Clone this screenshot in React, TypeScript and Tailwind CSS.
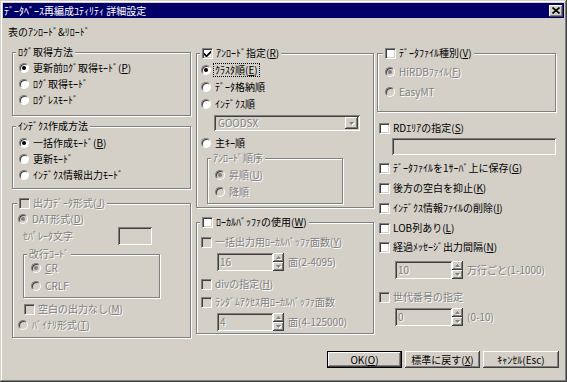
import React from "react";

const dim = "text-[#808080] [text-shadow:1px_1px_0_#fff]";
const raised =
  "bg-[#d4d0c8] shadow-[inset_-1px_-1px_0_#404040,inset_1px_1px_0_#fff,inset_-2px_-2px_0_#808080,inset_2px_2px_0_#d4d0c8]";
const sunken =
  "shadow-[inset_1px_1px_0_#808080,inset_-1px_-1px_0_#fff,inset_2px_2px_0_#404040,inset_-2px_-2px_0_#d4d0c8]";

const Label = ({ t }: { t: string }) => {
  const i = t.indexOf("&");
  if (i < 0) return <>{t}</>;
  return (
    <>
      {t.slice(0, i)}
      <span className="underline underline-offset-1">{t[i + 1]}</span>
      {t.slice(i + 2)}
    </>
  );
};

const Dot = ({ on, off }: { on?: boolean; off?: boolean }) => (
  <span
    className={`flex w-[10px] h-[10px] shrink-0 items-center justify-center rounded-full border border-t-[#808080] border-l-[#808080] border-r-white border-b-white shadow-[inset_1px_1px_0_#404040] ${
      off ? "bg-[#d4d0c8]" : "bg-white"
    }`}
  >
    {on && <span className={`w-[4px] h-[4px] rounded-full ${off ? "bg-[#808080]" : "bg-black"}`} />}
  </span>
);

const Box = ({ on, off }: { on?: boolean; off?: boolean }) => (
  <span
    className={`flex w-[11px] h-[11px] shrink-0 items-center justify-center border border-t-[#808080] border-l-[#808080] border-r-white border-b-white shadow-[inset_1px_1px_0_#404040,inset_-1px_-1px_0_#d4d0c8] ${
      off ? "bg-[#d4d0c8]" : "bg-white"
    }`}
  >
    {on && (
      <svg width="7" height="7" viewBox="0 0 7 7">
        <polygon points="0,2.5 2.5,5 7,0.5 7,3 2.5,7.5 0,5" fill={off ? "#808080" : "#000"} />
      </svg>
    )}
  </span>
);

type Item = { t: string; on?: boolean; off?: boolean; focus?: boolean; className?: string };

const Radio = ({ t, on, off, focus, className = "" }: Item) => (
  <div className={`flex h-[16px] items-center gap-[4px] ${className}`}>
    <Dot on={on} off={off} />
    <span className={`${off ? dim : ""} ${focus ? "outline-1 outline-dotted outline-black px-[1px] -ml-[1px]" : ""}`}>
      <Label t={t} />
    </span>
  </div>
);

const Check = ({ t, on, off, className = "" }: Item) => (
  <div className={`flex h-[16px] items-center gap-[3px] ${className}`}>
    <Box on={on} off={off} />
    <span className={off ? dim : ""}>
      <Label t={t} />
    </span>
  </div>
);

const Group = ({
  legend,
  at = "left-[3px]",
  className = "",
  children,
}: {
  legend: React.ReactNode;
  at?: string;
  className?: string;
  children?: React.ReactNode;
}) => (
  <div className={`relative border border-[#808080] shadow-[inset_1px_1px_0_#fff,1px_1px_0_#fff] ${className}`}>
    <div className={`absolute -top-[7px] ${at} flex h-[12px] items-center bg-[#d4d0c8] px-[2px]`}>{legend}</div>
    {children}
  </div>
);

const Arrow = ({ up }: { up?: boolean }) => (
  <svg width="5" height="3" viewBox="0 0 5 3" className="[filter:drop-shadow(1px_1px_0_#fff)]">
    <polygon points={up ? "2.5,0 5,3 0,3" : "0,0 5,0 2.5,3"} fill="#808080" />
  </svg>
);

const Spin = ({ v, w, unit, className = "" }: { v: string; w: string; unit: string; className?: string }) => (
  <div className={`flex items-center ${className}`}>
    <div className={`flex h-[18px] ${w} items-center bg-[#d4d0c8] pl-[3px] ${sunken} ${dim}`}>{v}</div>
    <div className="flex h-[18px] w-[11px] flex-col">
      <div className={`flex h-[9px] items-center justify-center ${raised}`}>
        <Arrow up />
      </div>
      <div className={`flex h-[9px] items-center justify-center ${raised}`}>
        <Arrow />
      </div>
    </div>
    <span className={`ml-[4px] ${dim}`}>{unit}</span>
  </div>
);

const Btn = ({ t, w, def }: { t: string; w: string; def?: boolean }) => (
  <div className={`${w} h-[17px] ${def ? "border border-black" : ""}`}>
    <div className={`flex h-full items-center justify-center ${raised}`}>
      <Label t={t} />
    </div>
  </div>
);

export default function App() {
  return (
    <div className="w-[567px] h-[382px] bg-[#d4d0c8] p-[3px] text-[10px] leading-[12px] text-black font-['Noto_Sans_CJK_JP',sans-serif] shadow-[inset_-1px_-1px_0_#404040,inset_1px_1px_0_#d4d0c8,inset_-2px_-2px_0_#808080,inset_2px_2px_0_#fff]">
      <div className="flex h-[15px] items-center justify-between bg-[#000068] pl-[1px] pr-[1px]">
        <span className="text-white">ﾃﾞｰﾀﾍﾞｰｽ再編成ﾕﾃｨﾘﾃｨ 詳細設定</span>
        <div className={`flex w-[14px] h-[12px] items-center justify-center ${raised}`}>
          <svg width="8" height="7" viewBox="0 0 8 7">
            <path d="M0.5 0.5 L7.5 6.5 M7.5 0.5 L0.5 6.5" stroke="#000" strokeWidth="1.6" />
          </svg>
        </div>
      </div>

      <div className="px-[5px]">
        <div className="mt-[8px] h-[12px]">
          表のｱﾝﾛｰﾄﾞ&amp;ﾘﾛｰﾄﾞ
        </div>

        <div className="mt-[14px] ml-[4px] flex items-start">
          {/* left column */}
          <div className="flex w-[179px] flex-col">
            <Group legend="ﾛｸﾞ取得方法" className="h-[64px] pt-[7px] pl-[6px]">
              <Radio t="更新前ﾛｸﾞ取得ﾓｰﾄﾞ(&P)" on />
              <Radio t="ﾛｸﾞ取得ﾓｰﾄﾞ" />
              <Radio t="ﾛｸﾞﾚｽﾓｰﾄﾞ" />
            </Group>
            <Group legend="ｲﾝﾃﾞｸｽ作成方法" className="mt-[10px] h-[63px] pt-[8px] pl-[6px]">
              <Radio t="一括作成ﾓｰﾄﾞ(&B)" on />
              <Radio t="更新ﾓｰﾄﾞ" />
              <Radio t="ｲﾝﾃﾞｸｽ情報出力ﾓｰﾄﾞ" />
            </Group>
            <Group
              legend={<Check t="出力ﾃﾞｰﾀ形式(&J)" off />}
              at="left-[4px]"
              className="mt-[14px] h-[135px] pt-[7px]"
            >
              <Radio t="DAT形式(&D)" on off className="pl-[5px]" />
              <div className="flex h-[18px] w-[139px] items-center justify-between pl-[10px]">
                <span className={dim}>ｾﾊﾟﾚｰﾀ文字</span>
                <div className={`h-[18px] w-[34px] bg-[#d4d0c8] ${sunken}`} />
              </div>
              <Group
                legend={<span className={dim}>改行ｺｰﾄﾞ</span>}
                className="mt-[9px] ml-[10px] h-[44px] w-[137px] pt-[4px] pl-[7px]"
              >
                <Radio t="&CR" on off className="h-[18px]" />
                <Radio t="CRLF" off className="h-[18px]" />
              </Group>
              <Check t="空白の出力なし(&M)" off className="mt-[3px] pl-[11px]" />
              <Radio t="ﾊﾞｲﾅﾘ形式(&T)" off className="pl-[5px]" />
            </Group>
          </div>

          {/* middle column */}
          <div className="mt-[1px] ml-[5px] flex w-[178px] flex-col">
            <Group legend={<Check t="ｱﾝﾛｰﾄﾞ指定(&R)" on />} className="h-[155px] pt-[7px]">
              <Radio t="ｸﾗｽﾀ順(&E)" on focus className="h-[17px] pl-[4px]" />
              <Radio t="ﾃﾞｰﾀ格納順" className="h-[17px] pl-[4px]" />
              <Radio t="ｲﾝﾃﾞｸｽ順" className="h-[17px] pl-[4px]" />
              <div className={`mt-[3px] ml-[17px] flex h-[16px] w-[146px] items-center justify-between bg-[#d4d0c8] pl-[4px] pr-[2px] ${sunken}`}>
                <span className={dim}>GOODSX</span>
                <div className={`flex h-[12px] w-[13px] items-center justify-center ${raised}`}>
                  <Arrow />
                </div>
              </div>
              <Radio t="主ｷｰ順" className="mt-[4px] pl-[4px]" />
              <Group
                legend={<span className={dim}>ｱﾝﾛｰﾄﾞ順序</span>}
                className="mt-[7px] ml-[10px] h-[46px] w-[136px] pt-[7px] pl-[7px]"
              >
                <Radio t="昇順(&U)" on off className="h-[17px]" />
                <Radio t="降順" off className="h-[17px]" />
              </Group>
            </Group>
            <Group legend={<Check t="ﾛｰｶﾙﾊﾞｯﾌｧの使用(&W)" />} className="mt-[14px] h-[112px] pt-[11px]">
              <Check t="一括出力用ﾛｰｶﾙﾊﾞｯﾌｧ面数(&Y)" off className="pl-[4px]" />
              <Spin v="16" w="w-[56px]" unit="面(2-4095)" className="mt-[3px] ml-[20px]" />
              <Check t="divの指定(&H)" off className="mt-[5px] pl-[4px]" />
              <Check t="ﾗﾝﾀﾞﾑｱｸｾｽ用ﾛｰｶﾙﾊﾞｯﾌｧ面数" off className="mt-[2px] pl-[4px]" />
              <Spin v="4" w="w-[56px]" unit="面(4-125000)" className="mt-[3px] ml-[20px]" />
            </Group>
          </div>

          {/* right column */}
          <div className="mt-[1px] ml-[3px] flex w-[179px] flex-col">
            <Group legend={<Check t="ﾃﾞｰﾀﾌｧｲﾙ種別(&V)" />} at="left-[5px]" className="h-[59px] pt-[8px] pl-[7px]">
              <Radio t="HiRDBﾌｧｲﾙ(&F)" on off className="h-[20px]" />
              <Radio t="EasyMT" off className="h-[20px]" />
            </Group>
            <Check t="RDｴﾘｱの指定(&S)" className="mt-[8px] pl-[2px]" />
            <div className={`mt-[2px] ml-[15px] h-[17px] w-[164px] bg-[#d4d0c8] ${sunken}`} />
            <Check t="ﾃﾞｰﾀﾌｧｲﾙを1ｻｰﾊﾞ上に保存(&G)" className="mt-[5px] pl-[2px]" />
            <Check t="後方の空白を抑止(&K)" className="mt-[4px] pl-[2px]" />
            <Check t="ｲﾝﾃﾞｸｽ情報ﾌｧｲﾙの削除(&I)" className="mt-[4px] pl-[2px]" />
            <Check t="LOB列あり(&L)" className="mt-[4px] pl-[2px]" />
            <Check t="経過ﾒｯｾｰｼﾞ出力間隔(&N)" className="mt-[3px] pl-[2px]" />
            <Spin v="10" w="w-[57px]" unit="万行ごと(1-1000)" className="mt-[6px] ml-[18px]" />
            <Check t="世代番号の指定" off className="mt-[10px] pl-[2px]" />
            <Spin v="0" w="w-[57px]" unit="(0-10)" className="mt-[3px] ml-[18px]" />
          </div>
        </div>

        <div className="mt-[13px] flex justify-end gap-[3px]">
          <Btn t="OK(&O)" w="w-[75px]" def />
          <Btn t="標準に戻す(&X)" w="w-[75px]" />
          <Btn t="ｷｬﾝｾﾙ(Esc)" w="w-[76px]" />
        </div>
      </div>
    </div>
  );
}
